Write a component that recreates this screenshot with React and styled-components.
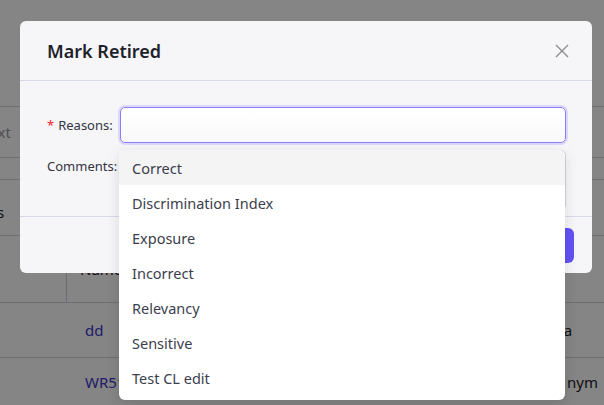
import React from "react";
import styled, { createGlobalStyle } from "styled-components";

const Global = createGlobalStyle`
  html, body { margin: 0; padding: 0; }
  body {
    width: 604px;
    height: 405px;
    overflow: hidden;
    background: #ffffff;
    font-family: "Noto Sans", "Open Sans", sans-serif;
  }
`;

const Page = styled.div`
  position: relative;
  width: 604px;
  height: 405px;
  overflow: hidden;
`;

const Table = styled.div`
  display: flex;
  flex-direction: column;
  padding-top: 106px;
  color: #1c1c24;
  font-size: 15px;
`;

const Row = styled.div`
  height: ${(p) => p.h}px;
  border-top: 1px solid #d2d2dc;
  display: flex;
  align-items: center;
  box-sizing: border-box;
`;

const Cell = styled.div`
  width: ${(p) => p.w || "auto"};
  flex: ${(p) => (p.grow ? 1 : "none")};
  height: 100%;
  display: flex;
  align-items: center;
  padding-left: ${(p) => p.pl || 0}px;
  padding-top: ${(p) => p.pt || 0}px;
  box-sizing: border-box;
  border-right: ${(p) => (p.divider ? "1px solid #d2d2dc" : "none")};
  color: ${(p) => p.color || "inherit"};
  white-space: nowrap;
  overflow: hidden;
`;

const Overlay = styled.div`
  position: absolute;
  inset: 0;
  background: rgba(0, 0, 0, 0.48);
`;

const Modal = styled.div`
  position: absolute;
  left: 20px;
  top: 21px;
  width: 572px;
  height: 252px;
  background: #f6f6f9;
  border-radius: 6px;
  display: flex;
  flex-direction: column;
  overflow: hidden;
`;

const Header = styled.div`
  height: 59px;
  border-bottom: 1px solid #d6d9e6;
  display: flex;
  align-items: center;
  justify-content: space-between;
  padding: 0 22px 0 27px;
  flex: none;
`;

const Title = styled.div`
  font-size: 18px;
  font-weight: 600;
  color: #1e1f2a;
`;

const Close = styled.button`
  border: none;
  background: none;
  padding: 0;
  width: 16px;
  height: 16px;
  display: flex;
  align-items: center;
  justify-content: center;
  cursor: pointer;
`;

const Body = styled.div`
  flex: 1;
  padding: 26px 26px 0 27px;
  display: flex;
  flex-direction: column;
  gap: 7px;
  border-bottom: 1px solid #d6d9e6;
`;

const Field = styled.div`
  display: flex;
  align-items: ${(p) => (p.top ? "flex-start" : "center")};
`;

const Label = styled.div`
  width: 73px;
  flex: none;
  font-size: 13px;
  color: #33343f;
  display: flex;
  align-items: center;
  padding-top: ${(p) => (p.top ? 7 : 0)}px;
`;

const Star = styled.span`
  color: #f5222d;
  margin-right: 4px;
  font-size: 13px;
`;

const Input = styled.div`
  flex: 1;
  height: 36px;
  box-sizing: border-box;
  border: 1px solid #8a7ef6;
  border-radius: 5px;
  background: linear-gradient(#ffffff, #f9f9fb);
  box-shadow: 0 0 0 2px rgba(125, 108, 255, 0.22);
`;

const TextArea = styled.div`
  flex: 1;
  height: 60px;
  box-sizing: border-box;
  border: 1px solid #d2d4de;
  border-radius: 5px;
  background: #fff;
`;

const Footer = styled.div`
  height: 56px;
  flex: none;
  display: flex;
  align-items: flex-start;
  justify-content: flex-end;
  padding: 11px 18px 0 0;
  box-sizing: border-box;
`;

const Button = styled.button`
  height: 35px;
  width: 90px;
  border: none;
  border-radius: 6px;
  background: #6352f5;
  color: #fff;
  font-family: inherit;
  font-size: 14px;
`;

const Dropdown = styled.ul`
  position: absolute;
  left: 119px;
  top: 150px;
  width: 446px;
  margin: 0;
  padding: 0 0 5px;
  list-style: none;
  background: #ffffff;
  border-radius: 6px;
  box-shadow: 0 4px 14px rgba(0, 0, 0, 0.12);
  overflow: hidden;
`;

const Option = styled.li`
  height: 35px;
  display: flex;
  align-items: center;
  padding-left: 13px;
  font-size: 14.5px;
  color: #3b3e4c;
  background: ${(p) => (p.active ? "#f4f4f4" : "transparent")};
`;

const reasons = [
  "Correct",
  "Discrimination Index",
  "Exposure",
  "Incorrect",
  "Relevancy",
  "Sensitive",
  "Test CL edit",
];

export default function App() {
  return (
    <Page>
      <Global />
      <Table>
        <Row h={51}>
          <Cell color="#9a9aa2" style={{ marginLeft: -18 }}>
            Text
          </Cell>
        </Row>
        <Row h={22} />
        <Row h={56}>
          <Cell pt={8} style={{ marginLeft: -36 }}>Items</Cell>
        </Row>
        <Row h={67}>
          <Cell w="67px" divider />
          <Cell pl={13}>Name</Cell>
        </Row>
        <Row h={55}>
          <Cell w="67px" />
          <Cell pl={18} grow color="#3d36c8">dd</Cell>
          <Cell w="65px">Data</Cell>
        </Row>
        <Row h={48}>
          <Cell w="67px" />
          <Cell pl={18} grow color="#3d36c8">WR51</Cell>
          <Cell w="37px">nym</Cell>
        </Row>
      </Table>
      <Overlay />
      <Modal>
        <Header>
          <Title>Mark Retired</Title>
          <Close aria-label="close">
            <svg width="14" height="14" viewBox="0 0 14 14">
              <path d="M1 1 L13 13 M13 1 L1 13" stroke="#8a8a8f" strokeWidth="1.3" fill="none" />
            </svg>
          </Close>
        </Header>
        <Body>
          <Field>
            <Label>
              <Star>*</Star>Reasons:
            </Label>
            <Input />
          </Field>
          <Field top>
            <Label top>Comments:</Label>
            <TextArea />
          </Field>
        </Body>
        <Footer>
          <Button>Confirm</Button>
        </Footer>
      </Modal>
      <Dropdown>
        {reasons.map((r, i) => (
          <Option key={r} active={i === 0}>
            {r}
          </Option>
        ))}
      </Dropdown>
    </Page>
  );
}
